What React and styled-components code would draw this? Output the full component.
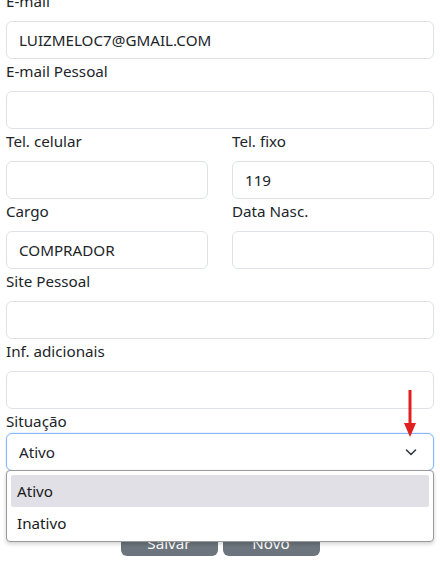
import React from "react";
import styled, { createGlobalStyle } from "styled-components";

const Global = createGlobalStyle`
  html, body { margin: 0; padding: 0; background: #fff; }
  body {
    font-family: "Noto Sans", "Open Sans", "Liberation Sans", sans-serif;
    font-size: 15.2px;
    color: #212529;
    overflow: hidden;
  }
  * { box-sizing: border-box; }
`;

const Page = styled.div`
  position: relative;
  height: 562px;
  overflow: hidden;
`;

const Form = styled.form`
  display: flex;
  flex-direction: column;
  padding: 0 6px;
  margin-top: -11px;
`;

const Row = styled.div`
  display: grid;
  grid-template-columns: 1fr 1fr;
  column-gap: 24px;
`;

const Field = styled.div`
  display: flex;
  flex-direction: column;
`;

const Label = styled.label`
  display: block;
  line-height: 24px;
  height: 24px;
  margin-bottom: ${(p) => (p.$tight ? "0" : "8px")};
  font-size: 15.2px;
`;

const Input = styled.div`
  height: 38px;
  border: 1px solid ${(p) => (p.$focus ? "#86b7fe" : "#dee2e6")};
  border-radius: 6px;
  padding: 0 12px;
  display: flex;
  align-items: center;
  justify-content: space-between;
  font-size: 15.2px;
  line-height: 24px;
  color: #212529;
  background: #fff;
  box-shadow: ${(p) => (p.$focus ? "0 0 0 1px rgba(13,110,253,0.08)" : "none")};
`;

const SelectWrap = styled.div`
  position: relative;
`;

const Chevron = styled.svg`
  width: 16px;
  height: 16px;
  margin-right: 2px;
`;

const Dropdown = styled.ul`
  position: absolute;
  left: 0;
  right: 0;
  top: 37px;
  margin: 0;
  padding: 4px 4px 2px 4px;
  list-style: none;
  background: #fff;
  border: 1px solid #9a9a9a;
  border-radius: 4px;
  box-shadow: 0 2px 4px rgba(0, 0, 0, 0.18);
  z-index: 5;
`;

const Option = styled.li`
  height: 32px;
  line-height: 32px;
  padding: 0 6px;
  border-radius: 2px;
  background: ${(p) => (p.$active ? "#e1e0e6" : "transparent")};
  color: #1a1a1a;
  font-size: 15.2px;
`;

const Buttons = styled.div`
  display: flex;
  justify-content: center;
  gap: 5px;
  margin-top: 47px;
`;

const Button = styled.button`
  width: 97px;
  height: 38px;
  border: none;
  border-radius: 6px;
  background: #6c757d;
  color: #fff;
  font-family: inherit;
  font-size: 15.2px;
  padding: 12px 0 0 0;
  display: flex;
  align-items: center;
  justify-content: center;
`;

const Arrow = styled.svg`
  position: absolute;
  left: 402px;
  top: 390px;
  width: 16px;
  height: 48px;
  z-index: 6;
`;

function Text({ label, value }) {
  return (
    <Field>
      <Label>{label}</Label>
      <Input>{value}</Input>
    </Field>
  );
}

export default function App() {
  return (
    <Page>
      <Global />
      <Form>
        <Text label="E-mail" value="LUIZMELOC7@GMAIL.COM" />
        <Text label="E-mail Pessoal" value="" />
        <Row>
          <Text label="Tel. celular" value="" />
          <Text label="Tel. fixo" value="119" />
        </Row>
        <Row>
          <Text label="Cargo" value="COMPRADOR" />
          <Text label="Data Nasc." value="" />
        </Row>
        <Text label="Site Pessoal" value="" />
        <Text label="Inf. adicionais" value="" />
        <Field>
          <Label $tight>Situação</Label>
          <SelectWrap>
            <Input $focus>
              <span>Ativo</span>
              <Chevron viewBox="0 0 16 16">
                <path
                  d="M3.5 6 L8 10.5 L12.5 6"
                  fill="none"
                  stroke="#343a40"
                  strokeWidth="1.6"
                  strokeLinecap="round"
                  strokeLinejoin="round"
                />
              </Chevron>
            </Input>
            <Dropdown>
              <Option $active>Ativo</Option>
              <Option>Inativo</Option>
            </Dropdown>
          </SelectWrap>
        </Field>
        <Buttons>
          <Button type="button">Salvar</Button>
          <Button type="button">Novo</Button>
        </Buttons>
      </Form>
      <Arrow viewBox="0 0 16 48">
        <line x1="8" y1="0" x2="8" y2="36" stroke="#e01f1f" strokeWidth="3" />
        <polygon points="2,33 14,33 8,47" fill="#e01f1f" />
      </Arrow>
    </Page>
  );
}
